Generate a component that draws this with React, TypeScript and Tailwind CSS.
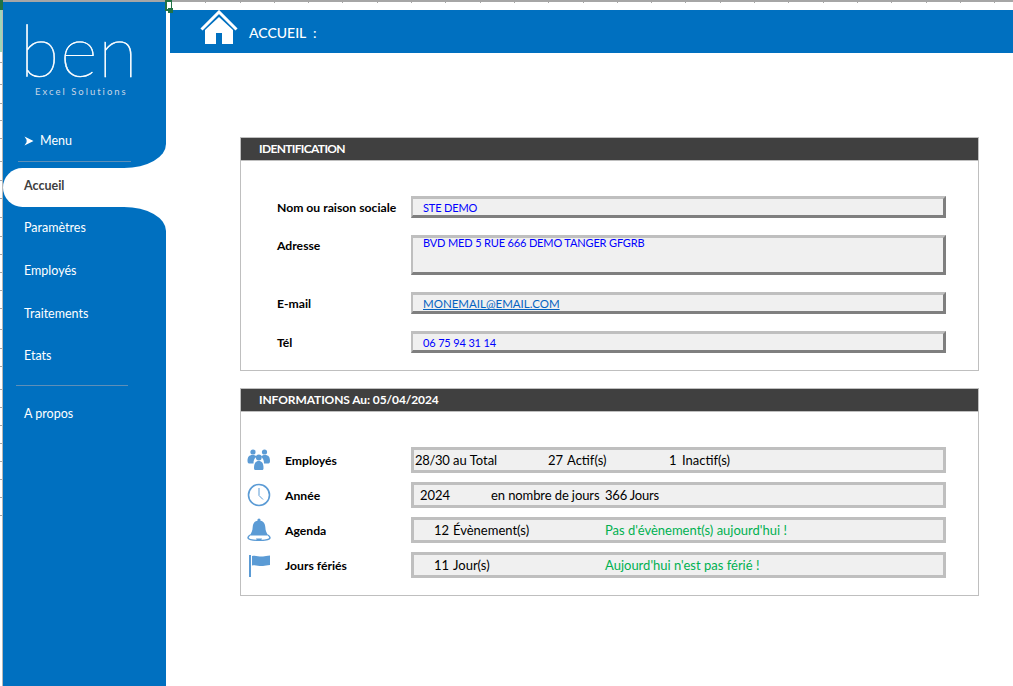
import React from "react";

const rowLines = [61, 22, 19, 17, 18, 23, 19, 18, 19, 19, 18, 18, 18, 18, 21, 19, 18, 23, 18, 18, 18, 18, 18, 18, 18];
const colCount = 25;

function HouseIcon() {
  return (
    <svg width="38" height="36" viewBox="0 0 38 36" className="ml-[30px] mb-[8px] shrink-0">
      <path d="M1.5 19.5 L19 2 L36.5 19.5" fill="none" stroke="white" strokeWidth="3" />
      <path d="M5 20 L19 7 L33 20 V34 H5 Z M16 34 H22 V23 H16 Z" fill="white" fillRule="evenodd" />
    </svg>
  );
}

function PeopleIcon() {
  return (
    <svg width="24" height="22" viewBox="0 0 24 22" fill="#5b9bd5">
      <circle cx="6" cy="3" r="2.6" />
      <circle cx="17.5" cy="3" r="2.6" />
      <path d="M0.5 12 C0.5 8 2 6 5.5 6 C7.5 6 8.5 6.5 9.5 7.5 C7.5 9.5 6.5 11 6.5 14.5 L2 14.5 C1 14.5 0.5 13 0.5 12 Z" />
      <path d="M23 12 C23 8 21.5 6 18 6 C16 6 15 6.5 14 7.5 C16 9.5 17 11 17 14.5 L21.5 14.5 C22.5 14.5 23 13 23 12 Z" />
      <circle cx="11.8" cy="8.5" r="2.9" />
      <path d="M7 19 C7 14.5 8.5 12 11.8 12 C15 12 16.5 14.5 16.5 19 C16.5 20.5 16 21 15 21 H8.5 C7.5 21 7 20.5 7 19 Z" />
    </svg>
  );
}

function ClockIcon() {
  return (
    <svg width="24" height="24" viewBox="0 0 24 24" fill="none" stroke="#5b9bd5">
      <circle cx="12" cy="12" r="10.5" strokeWidth="1.6" />
      <path d="M12 5 V12.5 L16 16.5" strokeWidth="1" />
    </svg>
  );
}

function BellIcon() {
  return (
    <svg width="24" height="24" viewBox="0 0 24 24" fill="#5b9bd5">
      <circle cx="12" cy="2" r="1.6" />
      <path d="M12 2.5 C16.5 2.5 18 5.5 18.3 9 C18.5 13 19.5 15 21.5 17.5 L2.5 17.5 C4.5 15 5.5 13 5.7 9 C6 5.5 7.5 2.5 12 2.5 Z" />
      <path d="M3 16.5 C0.5 18 0 19.5 0.5 20.5 C1.5 22.5 6 23 12 23 C18 23 22.5 22.5 23.5 20.5 C24 19.5 23.5 18 21 16.5 L21 18 C22.5 19 22.5 20 21.5 20.5 C20 21.5 16 21.8 12 21.8 C8 21.8 4 21.5 2.5 20.5 C1.5 20 1.5 19 3 18 Z" />
      <path d="M9 20.5 H15 C14.8 22 13.5 22.5 12 22.5 C10.5 22.5 9.2 22 9 20.5 Z" />
    </svg>
  );
}

function FlagIcon() {
  return (
    <svg width="24" height="24" viewBox="0 0 24 24" fill="#5b9bd5">
      <rect x="2" y="2" width="2" height="22" />
      <path d="M5 3 C9 2 12 4 16 3.5 C18 3.3 20 2.5 23 2.5 V12 C20 12 18 12.8 16 13 C12 13.5 9 11.5 5 12.5 Z" />
    </svg>
  );
}

function SideItem({ label }: { label: string }) {
  return (
    <div className="h-[42.67px] pt-[1px] pl-[21px] flex items-center text-[12.5px] text-white">{label}</div>
  );
}

function Panel({ title, titleClass, className, children }: { title: string; titleClass: string; className: string; children: React.ReactNode }) {
  return (
    <section className={`w-[739px] border border-[#bfbfbf] ${className}`}>
      <h2 className={`h-[23px] pl-[18px] bg-[#404040] border-b border-[#bfbfbf] flex items-center text-[12px] font-bold text-white ${titleClass}`}>
        {title}
      </h2>
      {children}
    </section>
  );
}

function BlueField({ h, top, children }: { h: string; top?: boolean; children: React.ReactNode }) {
  return (
    <div
      className={`w-[535px] ${h} bg-[#f0f0f0] border-t-[3px] border-l-[2px] border-t-[#bfbfbf] border-l-[#bfbfbf] border-r-[3px] border-b-[3px] border-r-[#7f7f7f] border-b-[#7f7f7f] pl-[10px] flex text-[11px] tracking-[-0.15px] text-[#0000ff] ${top ? "items-start leading-[10px]" : "items-center pt-[2px]"}`}
    >
      {children}
    </div>
  );
}

function InfoRow({ icon, label, children }: { icon: React.ReactNode; label: string; children: React.ReactNode }) {
  return (
    <div className="flex items-center">
      <div className="w-[38px] shrink-0">{icon}</div>
      <div className="w-[126px] shrink-0 pt-[3px] text-[12.2px] font-bold text-black">{label}</div>
      <div className="w-[535px] h-[26px] pt-[2px] bg-[#f0f0f0] border-[3px] border-[#bfbfbf] flex items-center text-[13px] text-black">
        {children}
      </div>
    </div>
  );
}

export default function App() {
  return (
    <div className="relative w-[1013px] h-[686px] overflow-hidden bg-white flex flex-col font-['Lato','Liberation_Sans',sans-serif]">
      {/* excel grid, top edge */}
      <div className="h-[2px] shrink-0 bg-[#a6a6a6]" />

      <div className="flex flex-1 min-h-0">
        {/* excel grid, left edge */}
        <div className="w-[3px] shrink-0 bg-white border-r border-[#b8b8b8] flex flex-col overflow-hidden">
          {rowLines.map((h, i) => (
            <div key={i} className="shrink-0 border-b border-[#a6a6a6]" style={{ height: h }} />
          ))}
        </div>

        {/* sidebar */}
        <aside className="w-[163px] shrink-0 flex flex-col">
          <div className="h-[166px] shrink-0 bg-[#0070c0] rounded-br-[42px_24px] flex flex-col">
            <div className="h-[119px] flex flex-col">
              <div className="h-[84px] pl-[17px] pt-[17px] text-[72px] leading-[60px] font-extralight text-white tracking-[1px] [-webkit-text-stroke:0.6px_white]">ben</div>
              <div className="text-[9.5px] leading-[12px] tracking-[2px] text-[#c9d6e6] pl-[32px]">Excel Solutions</div>
            </div>
            <div className="h-[40px] pl-[21px] flex items-center gap-[6px] text-[12.5px] text-white">
              <svg width="10" height="10" viewBox="0 0 10 10" fill="white">
                <path d="M0.5 0.5 L9.5 5 L0.5 9.5 L3 5.5 L1.5 5 L3 4.5 Z" />
              </svg>
              Menu
            </div>
            <div className="w-[113px] ml-[15px] border-t border-[#5e8fb8]" />
          </div>
          <div className="h-[39px] shrink-0 bg-[#0070c0]">
            <div className="h-full pb-[2px] bg-white rounded-l-[20px] pl-[21px] flex items-center text-[12.5px] font-bold text-[#404040]">
              Accueil
            </div>
          </div>
          <div className="flex-1 bg-[#0070c0] rounded-tr-[42px_24px]">
            <SideItem label="Paramètres" />
            <SideItem label="Employés" />
            <SideItem label="Traitements" />
            <SideItem label="Etats" />
            <div className="w-[112px] ml-[13px] mt-[7px] mb-[6.5px] border-t border-[#5e8fb8]" />
            <SideItem label="A propos" />
          </div>
        </aside>

        {/* main */}
        <main className="flex-1 min-w-0 pl-[4px]">
          <header className="h-[43px] mt-[8px] bg-[#0070c0] flex items-center">
            <HouseIcon />
            <h1 className="ml-[11px] pt-[1px] text-[14px] font-medium text-white whitespace-pre">ACCUEIL  :</h1>
          </header>

          <div className="pl-[70px]">
            <Panel title="IDENTIFICATION" titleClass="tracking-[-0.65px]" className="mt-[84px] h-[234px]">
              <div className="pt-[35px] pl-[36px] flex flex-col gap-[17px]">
                <div className="flex items-center">
                  <div className="w-[134px] pt-[3px] text-[12.2px] font-bold text-black">Nom ou raison sociale</div>
                  <BlueField h="h-[22px]">STE DEMO</BlueField>
                </div>
                <div className="flex items-start">
                  <div className="w-[134px] pt-[2px] text-[12.2px] font-bold text-black">Adresse</div>
                  <BlueField h="h-[40px]" top>BVD MED 5 RUE 666 DEMO TANGER GFGRB</BlueField>
                </div>
                <div className="flex items-center">
                  <div className="w-[134px] pt-[3px] text-[12.2px] font-bold text-black">E-mail</div>
                  <BlueField h="h-[22px]">
                    <span className="text-[11.5px] tracking-normal text-[#0563c1] underline">MONEMAIL@EMAIL.COM</span>
                  </BlueField>
                </div>
                <div className="flex items-center">
                  <div className="w-[134px] pt-[3px] text-[12.2px] font-bold text-black">Tél</div>
                  <BlueField h="h-[22px]">06 75 94 31 14</BlueField>
                </div>
              </div>
            </Panel>

            <Panel title="INFORMATIONS Au: 05/04/2024" titleClass="tracking-[-0.1px]" className="mt-[17px] h-[208px]">
              <div className="pt-[35px] pl-[6px] flex flex-col gap-[9px]">
                <InfoRow icon={<PeopleIcon />} label="Employés">
                  <span className="w-[39px] pl-[1px] tracking-[-0.3px]">28/30</span>
                  <span className="w-[95px]">au Total</span>
                  <span className="w-[19px]">27</span>
                  <span className="w-[102px]">Actif(s)</span>
                  <span className="w-[13px]">1</span>
                  <span>Inactif(s)</span>
                </InfoRow>
                <InfoRow icon={<ClockIcon />} label="Année">
                  <span className="w-[77px] pl-[6px]">2024</span>
                  <span className="w-[114px] tracking-[-0.1px]">en nombre de jours</span>
                  <span className="tracking-[-0.2px]">366 Jours</span>
                </InfoRow>
                <InfoRow icon={<BellIcon />} label="Agenda">
                  <span className="w-[39px] pl-[20px]">12</span>
                  <span className="w-[152px]">Évènement(s)</span>
                  <span className="text-[#00b050]">Pas d'évènement(s) aujourd'hui !</span>
                </InfoRow>
                <InfoRow icon={<FlagIcon />} label="Jours fériés">
                  <span className="w-[39px] pl-[20px]">11</span>
                  <span className="w-[152px]">Jour(s)</span>
                  <span className="text-[#00b050]">Aujourd'hui n'est pas férié !</span>
                </InfoRow>
              </div>
            </Panel>
          </div>
        </main>
      </div>

      {/* column ticks of the sheet, above the page */}
      <div className="absolute left-[172px] top-0 h-[3px] flex">
        {Array.from({ length: colCount }).map((_, i) => (
          <div key={i} className="w-[34.3px] shrink-0 border-r border-[#a6a6a6]" />
        ))}
      </div>

      {/* selected cell markers */}
      <div className="absolute left-0 top-0 w-[3px] h-[10px] bg-[#217346]" />
      <div className="absolute left-0 top-[10px] w-[2px] h-[42px] bg-[#9fd5b7]" />
      <div className="absolute left-[165px] top-0 w-[6px] h-[11px] border-2 border-[#217346] border-r-0" />
      <div className="absolute left-[171px] top-0 w-[1px] h-[8px] bg-[#217346]" />
      <div className="absolute left-[168px] top-[8px] w-[5px] h-[5px] bg-[#217346]" />
    </div>
  );
}
